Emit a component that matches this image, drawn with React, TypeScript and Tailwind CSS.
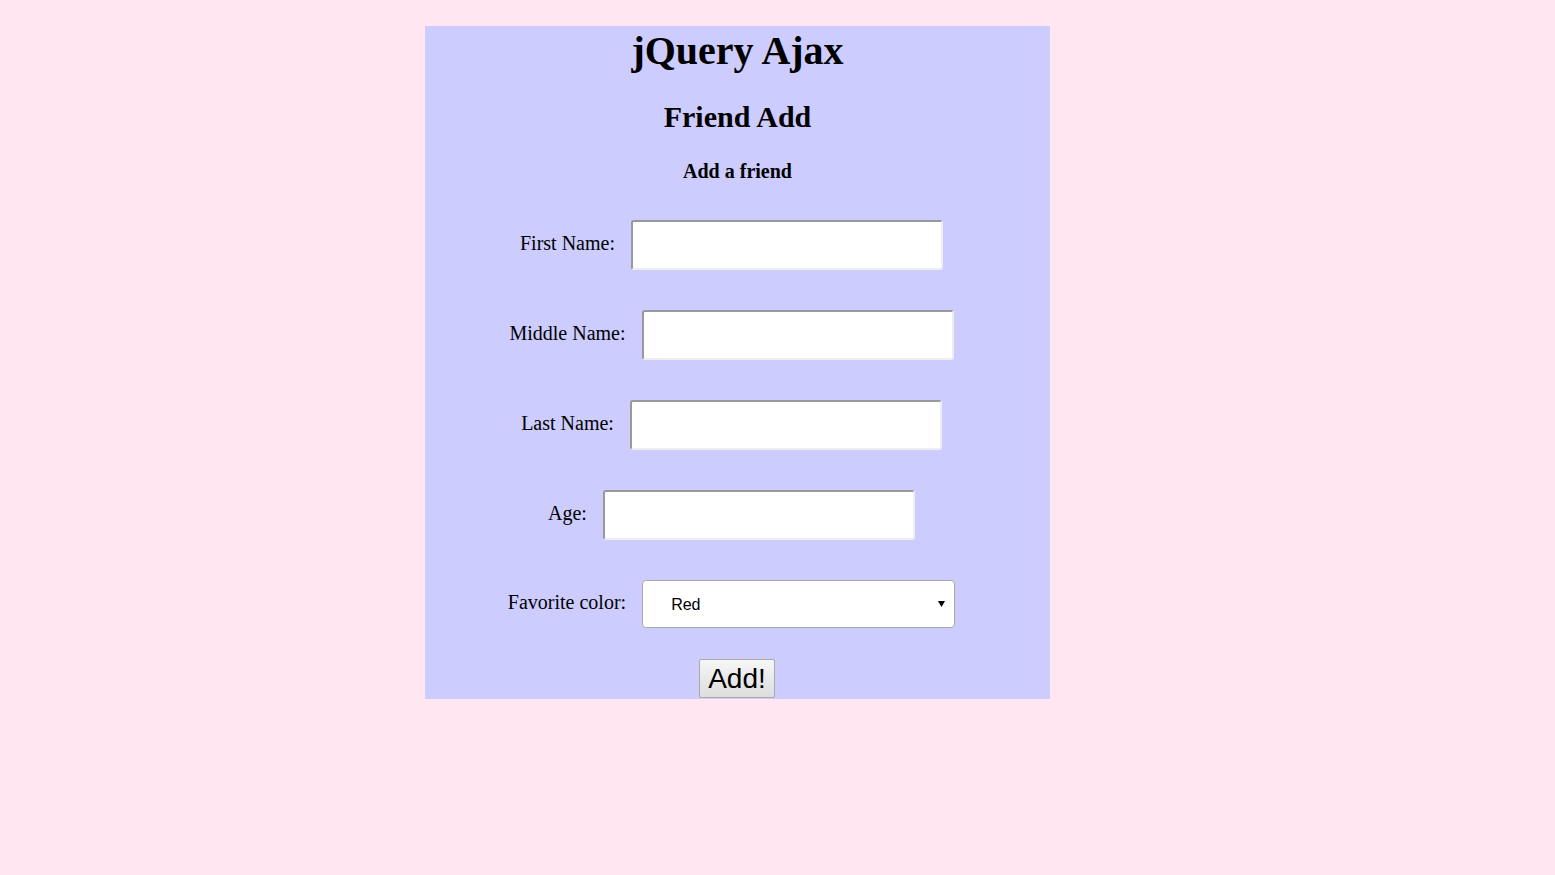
import React, { useState } from 'react';

const fields = [
  { id: 'firstName', label: 'First Name:' },
  { id: 'middleName', label: 'Middle Name:' },
  { id: 'lastName', label: 'Last Name:' },
  { id: 'age', label: 'Age:' },
];

const Row = ({ label, children }: { label: string; children: React.ReactNode }) => (
  <div className="flex items-center justify-center gap-4 pr-[12px]">
    <label className="mb-[4px] text-[20px] leading-[23px] text-black">{label}</label>
    {children}
  </div>
);

export default function App() {
  const [values, setValues] = useState<Record<string, string>>({});
  const [color, setColor] = useState('Red');

  return (
    <div className="min-h-screen w-full bg-[#ffe6f0] pt-[26px] font-['Liberation_Serif','Times_New_Roman',serif]">
      <div className="ml-[425px] flex w-[625px] flex-col bg-[#ccccff] pb-[1px]">
        <h1 className="mt-[2px] text-center text-[40px] font-bold leading-[46px] text-black">jQuery Ajax</h1>
        <h2 className="mt-[26px] text-center text-[30px] font-bold leading-[34px] text-black">Friend Add</h2>
        <h3 className="mt-[26px] text-center text-[20px] font-bold leading-[23px] text-black">Add a friend</h3>

        <div className="mt-[37px] flex flex-col gap-[40px]">
          {fields.map(f => (
            <Row key={f.id} label={f.label}>
              <input
                type="text"
                value={values[f.id] || ''}
                onChange={e => setValues({ ...values, [f.id]: e.target.value })}
                className="h-[50px] w-[312px] rounded-[3px] border-2 border-t-[#999999] border-l-[#999999] border-r-[#eeeeee] border-b-[#eeeeee] bg-white px-2 text-[16px] outline-none"
              />
            </Row>
          ))}

          <Row label="Favorite color:">
            <div className="relative">
              <select
                value={color}
                onChange={e => setColor(e.target.value)}
                className="h-[48px] w-[313px] appearance-none rounded-[4px] border border-[#aaaaaa] bg-white pl-[28px] pt-[2px] font-['Liberation_Sans',Arial,sans-serif] text-[16px] text-black outline-none"
              >
                <option>Red</option>
                <option>Green</option>
                <option>Blue</option>
                <option>Yellow</option>
              </select>
              <svg className="pointer-events-none absolute right-[10px] top-[21px]" width="7" height="6" viewBox="0 0 7 6">
                <path d="M0 0 L7 0 L3.5 6 Z" fill="#000" />
              </svg>
            </div>
          </Row>
        </div>

        <div className="mt-[31px] flex justify-center pr-[1px]">
          <button className="h-[39px] w-[76px] rounded-[2px] border border-[#a9a9a9] bg-gradient-to-b from-[#f6f6f6] to-[#dddddd] font-['Liberation_Sans',Arial,sans-serif] text-[28px] leading-[32px] text-black">
            Add!
          </button>
        </div>
      </div>
    </div>
  );
}
